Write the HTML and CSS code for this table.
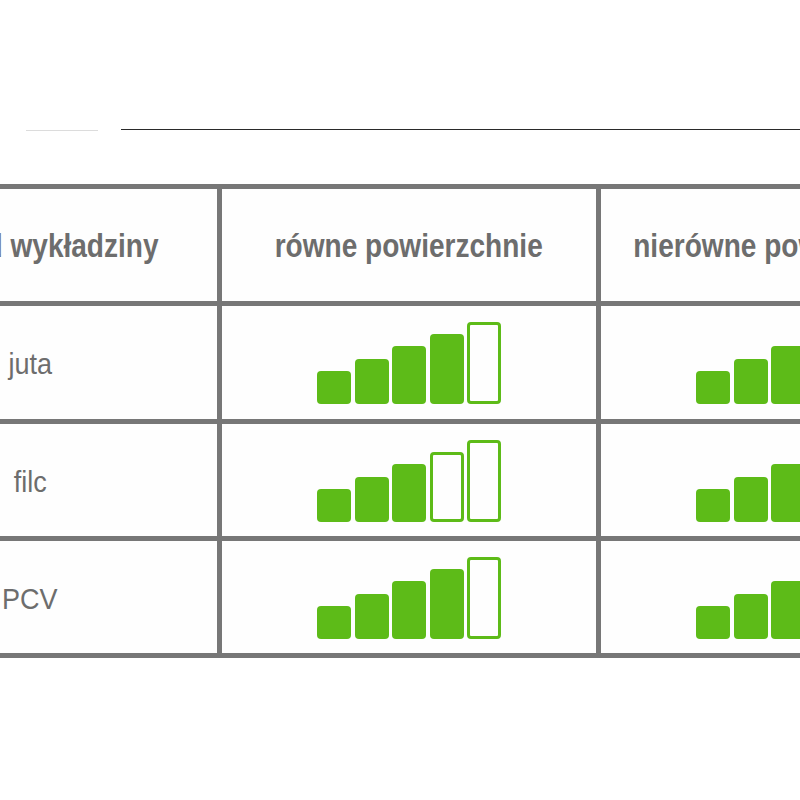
FILE: index.html
```html
<!DOCTYPE html>
<html lang="pl">
<head>
<meta charset="utf-8">
<title>Spód wykładziny</title>
<link rel="stylesheet" href="styles.css">
</head>
<body>
<div class="rules">
  <div class="rule-light"></div>
  <div class="rule-dark"></div>
</div>
<div class="table">
  <div class="cell head head-first"><span class="txt">spód wykładziny</span></div>
  <div class="cell head"><span class="txt">równe powierzchnie</span></div>
  <div class="cell head"><span class="txt">nierówne powierzchnie</span></div>

  <div class="cell label"><span class="txt">juta</span></div>
  <div class="cell"><div class="bars"><span class="bar b1"></span><span class="bar b2"></span><span class="bar b3"></span><span class="bar b4"></span><span class="bar b5 empty"></span></div></div>
  <div class="cell"><div class="bars"><span class="bar b1"></span><span class="bar b2"></span><span class="bar b3"></span><span class="bar b4 empty"></span><span class="bar b5 empty"></span></div></div>

  <div class="cell label"><span class="txt">filc</span></div>
  <div class="cell"><div class="bars"><span class="bar b1"></span><span class="bar b2"></span><span class="bar b3"></span><span class="bar b4 empty"></span><span class="bar b5 empty"></span></div></div>
  <div class="cell"><div class="bars"><span class="bar b1"></span><span class="bar b2"></span><span class="bar b3"></span><span class="bar b4"></span><span class="bar b5 empty"></span></div></div>

  <div class="cell label"><span class="txt">PCV</span></div>
  <div class="cell"><div class="bars"><span class="bar b1"></span><span class="bar b2"></span><span class="bar b3"></span><span class="bar b4"></span><span class="bar b5 empty"></span></div></div>
  <div class="cell"><div class="bars"><span class="bar b1"></span><span class="bar b2"></span><span class="bar b3"></span><span class="bar b4 empty"></span><span class="bar b5 empty"></span></div></div>
</div>
</body>
</html>
```

FILE: styles.css
```css
html, body {
  margin: 0;
  padding: 0;
  background: #ffffff;
  overflow: hidden;
}

body {
  width: 800px;
  height: 800px;
  font-family: "Liberation Sans", Arial, sans-serif;
  color: #6d6d6d;
}

.rules {
  display: flex;
  align-items: flex-start;
  padding-top: 129px;
}

.rule-light {
  margin-top: 1px;
  margin-left: 26px;
  width: 72px;
  height: 1px;
  background: #dcdcdc;
}

.rule-dark {
  margin-left: 23px;
  flex: 1;
  height: 1px;
  background: #2a2a2a;
}

.table {
  display: grid;
  grid-template-columns: repeat(3, 374px);
  grid-template-rows: 112px 113px 112px 112px;
  gap: 5px;
  padding: 5px;
  background: #777777;
  width: max-content;
  margin-top: 53px;
  margin-left: -162px;
}

.cell {
  background: #fefefe;
  display: flex;
  align-items: center;
  justify-content: center;
  white-space: nowrap;
}

.txt {
  display: inline-block;
}

.head {
  font-weight: 700;
  font-size: 33px;
  padding-top: 1px;
}

.head .txt {
  transform: scaleX(0.85);
}

.head-first {
  padding-left: 34px;
}

.label {
  font-weight: 400;
  font-size: 30px;
  padding-top: 3px;
}

.label .txt {
  transform: scaleX(0.9);
}

.bars {
  display: flex;
  align-items: flex-end;
  gap: 3.5px;
  height: 82px;
  margin-top: 1px;
}

.bar {
  display: block;
  box-sizing: border-box;
  width: 34px;
  border-radius: 4px;
  background: #5dbb18;
}

.bar.empty {
  background: transparent;
  border: 3px solid #5dbb18;
}

.b1 { height: 33px; }
.b2 { height: 45px; }
.b3 { height: 58px; }
.b4 { height: 70px; }
.b5 { height: 82px; }
```
